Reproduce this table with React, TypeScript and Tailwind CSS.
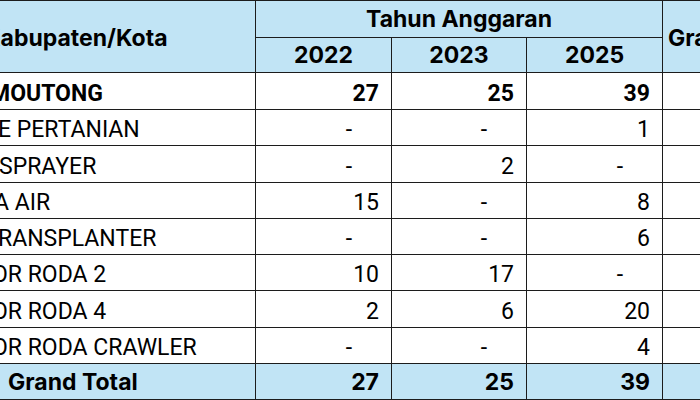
const rows = [
  { label: "MOUTONG", indent: "-ml-[10px]", bold: true, vals: ["27", "25", "39"] },
  { label: "E PERTANIAN", indent: "-ml-[2px]", bold: false, vals: ["-", "-", "1"] },
  { label: "SPRAYER", indent: "-ml-[1px]", bold: false, vals: ["-", "2", "-"] },
  { label: "A AIR", indent: "-ml-[6px]", bold: false, vals: ["15", "-", "8"] },
  { label: "RANSPLANTER", indent: "-ml-[2px]", bold: false, vals: ["-", "-", "6"] },
  { label: "OR RODA 2", indent: "-ml-[8px]", bold: false, vals: ["10", "17", "-"] },
  { label: "OR RODA 4", indent: "-ml-[8px]", bold: false, vals: ["2", "6", "20"] },
  { label: "OR RODA CRAWLER", indent: "-ml-[8px]", bold: false, vals: ["-", "-", "4"] },
];

const head = "font-['Inter',sans-serif] font-bold text-[23px] leading-none text-black";
const body = "font-['Roboto',sans-serif] text-[23px] leading-none text-black";

const NumCell = ({ v, bold }: { v: string; bold?: boolean }) => (
  <div className={`bg-white flex items-end justify-end pb-[4px] ${v === "-" ? "pr-[39px]" : "pr-[12px]"} ${body} ${bold ? "font-bold" : ""}`}>
    {v}
  </div>
);

export default function App() {
  return (
    <div className="w-[700px] h-[400px] overflow-hidden bg-white">
      <div className="grid grid-cols-[255px_135px_134px_135px_1fr] grid-rows-[36px_34px_36px_35px_36px_35px_35px_35px_36px_35px_35px] gap-px bg-[#1c1c1c] py-px w-[700px]">
        {/* header */}
        <div className="row-span-2 bg-[#c1e4f5] flex items-center overflow-hidden pt-[4px]">
          <span className={`${head} -ml-[16px] whitespace-nowrap`}>Kabupaten/Kota</span>
        </div>
        <div className={`col-span-3 bg-[#c1e4f5] flex items-end justify-center pb-[6px] ${head}`}>Tahun Anggaran</div>
        <div className="row-span-2 bg-[#c1e4f5] flex items-center pl-[5px] pt-[4px] overflow-hidden">
          <span className={`${head} whitespace-nowrap`}>Grand Total</span>
        </div>
        {["2022", "2023", "2025"].map((y) => (
          <div key={y} className={`bg-[#c1e4f5] flex items-end justify-center pb-[5px] ${head}`}>{y}</div>
        ))}

        {/* body */}
        {rows.map((r) => (
          <div key={r.label} className="contents">
            <div className="bg-white flex items-end overflow-hidden pb-[4px]">
              <span className={`${body} ${r.indent} whitespace-nowrap ${r.bold ? "font-bold" : ""}`}>{r.label}</span>
            </div>
            {r.vals.map((v, i) => (
              <NumCell key={i} v={v} bold={r.bold} />
            ))}
            <div className="bg-white" />
          </div>
        ))}

        {/* grand total */}
        <div className="bg-[#c1e4f5] flex items-end pl-[8px] pb-[5px]">
          <span className={head}>Grand Total</span>
        </div>
        {["27", "25", "39"].map((v, i) => (
          <div key={i} className={`bg-[#c1e4f5] flex items-end justify-end pr-[12px] pb-[5px] ${head}`}>{v}</div>
        ))}
        <div className="bg-[#c1e4f5]" />
      </div>
    </div>
  );
}
